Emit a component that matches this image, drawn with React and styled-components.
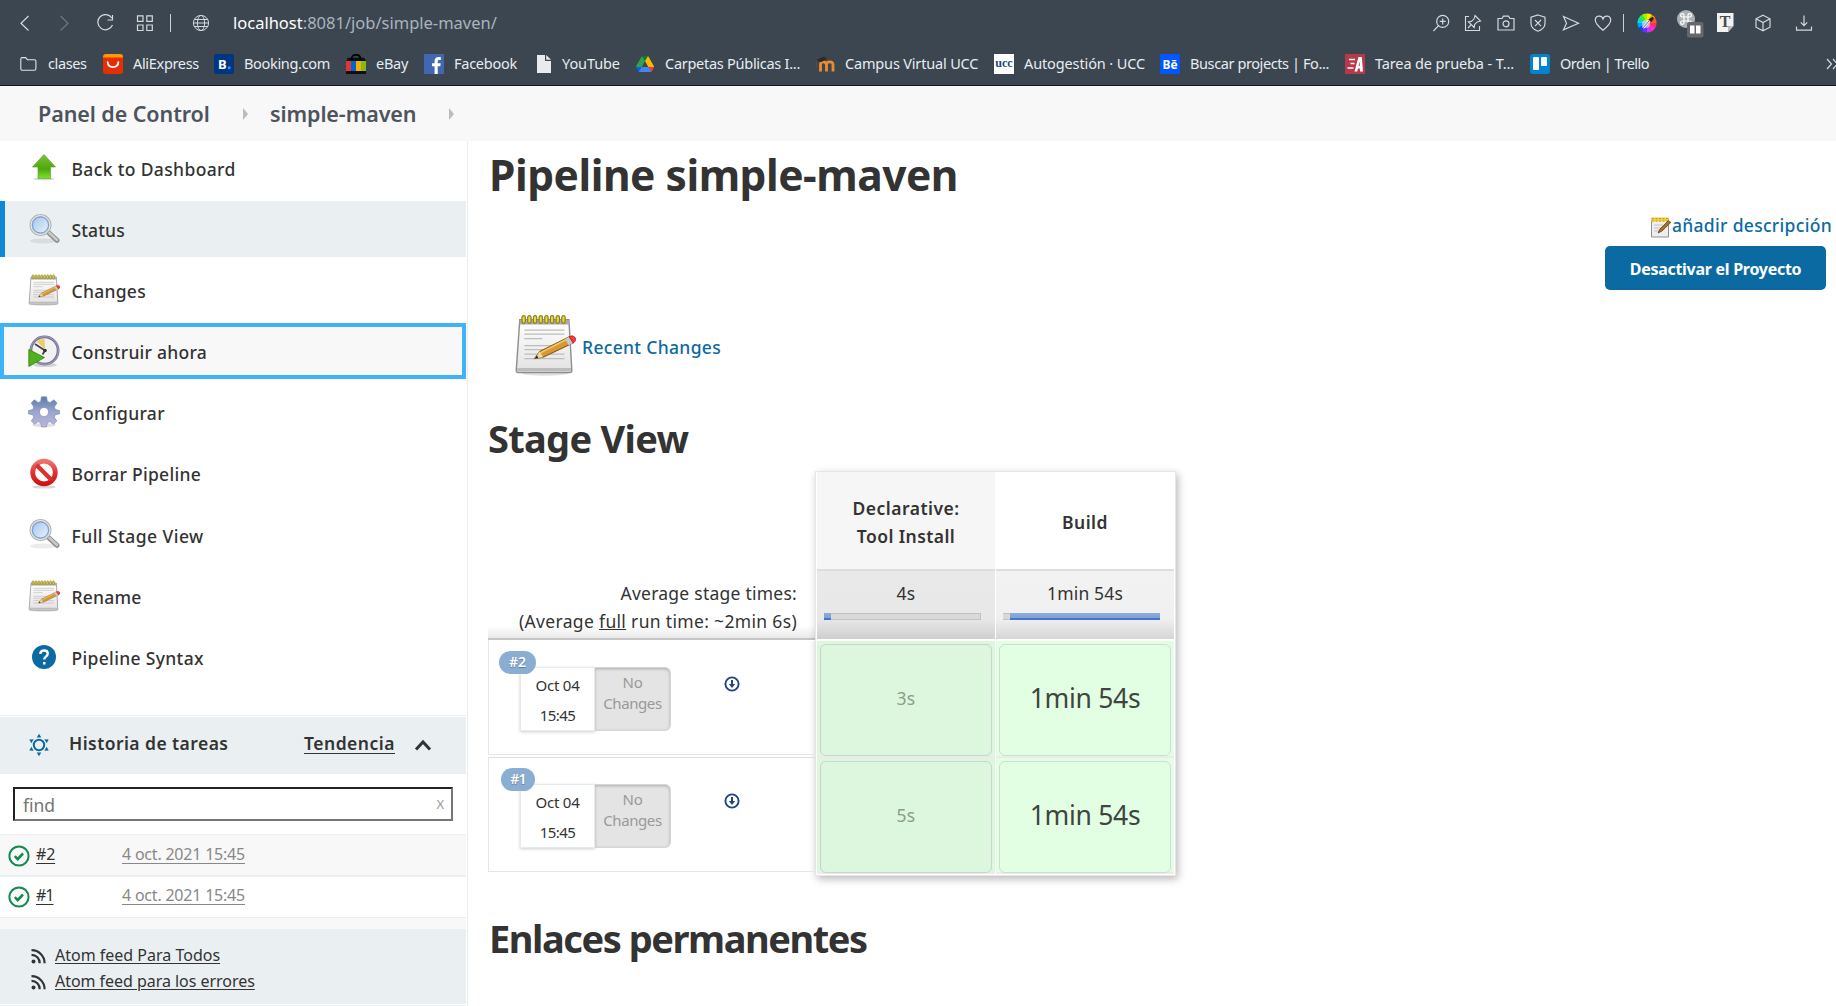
import React from "react";
import styled, { createGlobalStyle } from "styled-components";

const Global = createGlobalStyle`
  * { box-sizing: border-box; }
  body { margin: 0; background: #fff; font-family: "Noto Sans", "Open Sans", sans-serif; color: #333; }
  h1, h2 { margin: 0; }
`;

const Page = styled.div`
  width: 1836px; height: 1006px; overflow: hidden;
  display: flex; flex-direction: column;
`;

const Label = styled.span`
  white-space: nowrap;
  letter-spacing: ${(p) => p.$ls || 0}px;
`;
const L = ({ ls, children }) => <Label $ls={ls}>{children}</Label>;

/* ---------- browser chrome ---------- */
const Chrome = styled.header`
  flex: none; height: 86px; background: #3b4651; border-bottom: 1px solid #14181c;
  display: flex; flex-direction: column; color: #e8ecef;
`;
const ToolRow = styled.div`
  height: 45px; display: flex; align-items: center; padding: 0 23px 0 15px;
`;
const Slot = styled.span`
  flex: none; display: flex; align-items: center; justify-content: center;
  width: ${(p) => p.$w || 18}px; margin-left: ${(p) => p.$ml || 0}px;
`;
const Bar = styled.span`
  flex: none; width: 1px; height: 18px; background: #c9d0d6; margin-left: ${(p) => p.$ml}px;
`;
const Url = styled.div`
  margin-left: 23px; flex: 1; font-size: 16.500px; line-height: 20px; color: #aab4bd;
  b { font-weight: 400; color: #fff; }
`;
const Bookmarks = styled.nav`
  height: 40px; display: flex; align-items: center; padding: 0 0 2px 20px;
`;
const Bookmark = styled.a`
  flex: none; display: flex; align-items: center; font-size: 14.500px; line-height: 20px; color: #e8ecef;
  width: ${(p) => p.$w}px; gap: ${(p) => p.$gap || 10}px;
  span { padding-bottom: 2px; }
`;
const More = styled.span`margin-left: auto; display: flex; width: 10px; overflow: hidden; svg { flex: none; }`;

const Line = ({ size = 18, children, sw = 1.2, color = "#d3d9de" }) => (
  <svg width={size} height={size} viewBox="0 0 18 18" fill="none" stroke={color} strokeWidth={sw}>{children}</svg>
);

const Wheel = () => (
  <svg width="20" height="20" viewBox="0 0 20 20">
    {["#ffe600", "#ff9a00", "#ff5a20", "#ff3060", "#ff30c0", "#d030ff", "#6a30ff", "#1540ff", "#00a0ff", "#00e0d0", "#30e850", "#a8f000"].map((c, i) => {
      const a = (i * 30 * Math.PI) / 180, b = ((i * 30 + 31) * Math.PI) / 180;
      return <path key={c} fill={c} d={`M10 10L${10 + 9.6 * Math.sin(a)} ${10 - 9.6 * Math.cos(a)}A9.6 9.6 0 0 1 ${10 + 9.6 * Math.sin(b)} ${10 - 9.6 * Math.cos(b)}Z`} />;
    })}
    <circle cx="9" cy="11" r="4" fill="#fff" opacity=".5" />
    <path d="M6 15l6-7" stroke="#e8f4ff" strokeWidth="2.600" /><path d="M6 15l6-7" stroke="#57a" strokeWidth="1" />
    <path d="M11.500 6.500l3 2.600L17 5.200l-1.500-1.500z" fill="#222" />
  </svg>
);

const favs = {
  folder: <svg width="17" height="16" viewBox="0 0 17 16" fill="none" stroke="#e0e5e8" strokeWidth="1.100"><path d="M.8 12.800V3Q.8 1.600 2.200 1.600H5.600L7.400 3.700H14.500Q15.900 3.700 15.900 5.100V12.800Q15.900 14.200 14.500 14.200H2.200Q.8 14.200.8 12.800z" /></svg>,
  ali: <svg width="20" height="20" viewBox="0 0 20 20"><rect width="20" height="19" rx="3" fill="#ff9a00" /><path d="M0 3.500H20V17a3 3 0 0 1-3 3H3a3 3 0 0 1-3-3z" fill="#e62e04" /><path d="M4.700 8.300c.5 6.400 10.100 6.400 10.600 0" fill="none" stroke="#fff" strokeWidth="1.900" strokeLinecap="round" /></svg>,
  booking: <svg width="20" height="20" viewBox="0 0 20 20"><rect width="20" height="20" rx="3" fill="#003580" /><text x="4" y="15" fontSize="13" fontWeight="700" fontFamily="Noto Sans, sans-serif" fill="#fff">B</text><circle cx="15.200" cy="13.800" r="1.500" fill="#00a5ff" /></svg>,
  ebay: <svg width="20" height="20" viewBox="0 0 20 20"><path d="M2 3.500h16l2 3.500v13H0V7z" fill="#0c0e10" /><path d="M0 0h20v3.500H0z" fill="#3b4651" /><path d="M5.800 6V4.500c0-5 8.400-5 8.400 0V6" fill="none" stroke="#000" strokeWidth="1.800" /><path d="M0 7h5v10H0z" fill="#e53238" /><path d="M5 7h5v10H5z" fill="#0064d2" /><path d="M10 7h5v10h-5z" fill="#f5af02" /><path d="M15 7h5v10h-5z" fill="#86b817" /></svg>,
  fb: <svg width="20" height="20" viewBox="0 0 20 20"><rect width="20" height="20" fill="#4267b2" /><path d="M13.700 20v-7.700h2.600l.4-3h-3V7.400c0-.9.3-1.500 1.500-1.500h1.600V3.200c-.3 0-1.200-.1-2.300-.1-2.300 0-3.900 1.400-3.900 4v2.200H8v3h2.600V20z" fill="#fff" /></svg>,
  doc: <svg width="16" height="20" viewBox="0 0 16 20"><path d="M1 1h8v6h6v12H1z" fill="#e9ecee" /><path d="M10.200 1L15 5.800h-4.800z" fill="#e9ecee" /></svg>,
  drive: <svg width="18" height="18" viewBox="0 0 87 78"><path d="M6.600 66.800l3.800 6.700c.8 1.400 2 2.500 3.300 3.300L27.500 53H0c0 1.500.4 3.100 1.200 4.500z" fill="#0066da" /><path d="M43.600 25L29.900 1.200c-1.300.8-2.500 1.900-3.300 3.300l-25.400 44C.4 49.900 0 51.500 0 53h27.500z" fill="#2ea44f" /><path d="M73.600 76.800c1.300-.8 2.500-1.900 3.300-3.300l9.200-16c.8-1.400 1.200-3 1.200-4.500H59.800L65.700 64.500z" fill="#ea4335" /><path d="M43.600 25L57.400 1.200C56 .4 54.500 0 52.900 0H34.400c-1.600 0-3.200.4-4.500 1.200z" fill="#00832d" /><path d="M59.800 53H27.500L13.700 76.800c1.300.8 2.900 1.200 4.500 1.200h50.900c1.600 0 3.200-.4 4.500-1.200z" fill="#4285f4" /><path d="M73.400 26.500l-12.700-22c-.8-1.400-2-2.500-3.300-3.300L43.600 25l16.200 28h27.500c0-1.500-.4-3.100-1.200-4.500z" fill="#ffba00" /></svg>,
  moodle: <svg width="20" height="18" viewBox="0 0 20 18"><path d="M5.500 16.500V9.500q0-2.700 2.700-2.700T11.500 9.500V16.500M11.500 16.500V9.500q0-2.700 3.200-2.700T18 9.500V16.500" fill="none" stroke="#f08a2c" strokeWidth="2.800" /><path d="M1 5l8-3.500 3 2.500-6 3.200z" fill="#2b2b2d" /><path d="M1.500 5v8" stroke="#604a40" strokeWidth=".8" /></svg>,
  ucc: <svg width="20" height="20" viewBox="0 0 20 20"><rect width="20" height="20" fill="#fff" /><text x="1.200" y="12.500" fontSize="11.500" fontWeight="700" fontFamily="Liberation Serif, serif" fill="#1a4a7a" textLength="17.500" lengthAdjust="spacingAndGlyphs">ucc</text></svg>,
  be: <svg width="20" height="20" viewBox="0 0 20 20"><rect width="20" height="20" fill="#0057ff" /><text x="2.500" y="15" fontSize="12.500" fontWeight="700" fontFamily="Noto Sans, sans-serif" fill="#fff" textLength="15" lengthAdjust="spacingAndGlyphs">Bē</text></svg>,
  tdp: <svg width="20" height="20" viewBox="0 0 20 20"><rect width="20" height="20" fill="#b8384a" /><path d="M4 5.500h6M5.500 9.500h4M2.500 14h6" stroke="#fff" strokeWidth="1.500" /><path d="M9.500 17.500l3.900-14.500h3.400L18 17.500h-3l-.2-3h-1.800l-.8 3zM13.500 12h1.200L14.700 7z" fill="#fff" fillRule="evenodd" /></svg>,
  trello: <svg width="20" height="20" viewBox="0 0 20 20"><rect width="20" height="20" rx="3" fill="#0284d0" /><rect x="3" y="3" width="6" height="13" rx="1" fill="#fff" /><rect x="11" y="3" width="6" height="9" rx="1" fill="#fff" /></svg>,
};

const bookmarks = [
  ["folder", "clases", 83, 11, -0.4],
  ["ali", "AliExpress", 111, 10, -0.32],
  ["booking", "Booking.com", 132, 10, -0.32],
  ["ebay", "eBay", 78, 10, -0.25],
  ["fb", "Facebook", 112, 10, -0.25],
  ["doc", "YouTube", 100, 10, -0.1],
  ["drive", "Carpetas Públicas I...", 179, 11, -0.27],
  ["moodle", "Campus Virtual UCC", 179, 10, -0.17],
  ["ucc", "Autogestión · UCC", 166, 10, -0.12],
  ["be", "Buscar projects | Fo...", 185, 10, -0.4],
  ["tdp", "Tarea de prueba - T...", 185, 10, -0.13],
  ["trello", "Orden | Trello", 130, 10, -0.5],
];

/* ---------- breadcrumbs ---------- */
const Crumbs = styled.div`
  flex: none; height: 55px; background: #f8f8f8; display: flex; align-items: center; padding-left: 38px;
  font-size: 21.500px; font-weight: 600; line-height: 30px; color: #4d545d;
`;
const Crumb = styled.a`width: ${(p) => p.$w}px; flex: none; padding-top: 1px;`;
const CrumbArrow = styled.span`
  width: 0; height: 0; margin: 0 22px 0 0; flex: none;
  border: 6px solid transparent; border-left: 5px solid #bbb; border-right: 0;
`;

/* ---------- sidebar ---------- */
const Body = styled.div`flex: 1; min-height: 0; display: flex; overflow: hidden;`;
const Side = styled.aside`width: 468px; flex: none; border-right: 1px solid #eceff1; padding-right: 1px;`;
const Tasks = styled.div`height: 574px; display: flex; flex-direction: column; gap: 5.100px;`;
const Task = styled.a`
  flex: none; height: ${(p) => (p.$first ? 55 : 56)}px; display: flex; align-items: center; gap: 12px;
  padding: ${(p) => (p.$first ? 0 : 2)}px 0 0 ${(p) => (p.$active ? 23 : p.$focus ? 24 : 28)}px;
  font-size: 17.500px; font-weight: 500; color: #333;
  background: ${(p) => (p.$active ? "#eaeff2" : p.$focus ? "#f8f8f8" : "transparent")};
  ${(p) => p.$active && "border-left: 5px solid #0b88d6;"}
  ${(p) => p.$focus && "border: 4px solid #3fb3f8;"}
  > span:last-child { margin-left: -0.500px; }
`;
const TaskIcon = styled.span`width: 32px; height: 32px; display: flex; align-items: center; justify-content: center; margin-top: ${(p) => p.$mt}px;`;

const History = styled.section`border-top: 1px solid #eaeff2; padding-top: 1px;`;
const HistoryHead = styled.div`
  height: 57px; background: #eaeff2; display: flex; align-items: center; padding: 0 34px 4px 27px;
  font-size: 17.500px; font-weight: 600; color: #333;
  svg { margin-top: 3px; }
`;
const HistoryTitle = styled.span`margin-left: 18px; width: 235px; flex: none; padding-bottom: 1px;`;
const Trend = styled.a`width: 91px; flex: none; text-decoration: underline; text-underline-offset: 3px; text-decoration-thickness: 1px; margin-right: 19px; padding-bottom: 1px;`;
const SearchWrap = styled.div`height: 61px; padding: 13px 13px 0; border-bottom: 1px solid #eaeff2;`;
const Search = styled.div`
  height: 34px; border: 2px solid #767676; border-top-color: #222; border-left-color: #222; padding: 2px 7px 0 8px;
  display: flex; align-items: center; justify-content: space-between; font-size: 17.500px; color: #757575;
  small { font-size: 13px; color: #999; margin-bottom: 3px; }
`;
const BuildRow = styled.div`
  height: ${(p) => p.$h}px; background: ${(p) => p.$bg}; display: flex; align-items: center; padding: 0 0 ${(p) => (p.$b === 1 ? 4 : 2)}px 8px;
  border-bottom: ${(p) => p.$b}px solid #eaeff2; font-size: 16px; color: #333;
  svg { margin-top: 4px; }
`;
const BuildNo = styled.a`width: 86px; margin-left: 6px; text-decoration: underline; text-underline-offset: 3px;`;
const BuildDate = styled.a`color: #888; text-decoration: underline; text-underline-offset: 3px;`;
const Spacer = styled.div`height: 11px; background: #f8f8f8;`;
const Feeds = styled.div`
  height: 75px; background: #eaeff2; padding: 13px 0 0 30px; font-size: 16px; color: #333;
`;
const FeedEnd = styled.div`height: 2px; border-bottom: 1px solid #eaeff2;`;
const Feed = styled.a`height: 26px; display: flex; align-items: center; gap: 8px; text-decoration: underline; text-underline-offset: 2px; svg { margin-top: 2px; }`;

const Magnifier = () => (
  <svg width="32" height="32" viewBox="0 0 32 32">
    <ellipse cx="15" cy="28" rx="13" ry="2.500" fill="#000" opacity=".08" />
    <path d="M20.500 19.500l8.500 7.800" stroke="#8c8c8c" strokeWidth="5" strokeLinecap="round" />
    <path d="M21.500 20l7.500 7" stroke="#c9c9c9" strokeWidth="2.600" strokeLinecap="round" />
    <circle cx="12.500" cy="12" r="9.800" fill="#a9c9ee" stroke="#b5b5b5" strokeWidth="2.400" />
    <circle cx="12.500" cy="12" r="9.500" fill="none" stroke="#eee" strokeWidth="1" />
    <circle cx="12.500" cy="12" r="8" fill="url(#lens)" stroke="#6f9bd3" strokeWidth="1" />
    <defs><linearGradient id="lens" x1="0" y1="0" x2="1" y2="1"><stop offset="0" stopColor="#a5c6ec" /><stop offset="1" stopColor="#e8f2fc" /></linearGradient></defs>
  </svg>
);
const Notepad = ({ size = 32 }) => (
  <svg width={size} height={size} viewBox="0 0 48 48">
    <defs><linearGradient id="paper" x1="0" y1="0" x2="0" y2="1"><stop offset="0" stopColor="#fff" /><stop offset="1" stopColor="#e2e2e2" /></linearGradient></defs>
    <ellipse cx="24" cy="46" rx="18" ry="1.800" fill="#000" opacity=".12" />
    <path d="M4.500 4.500h38l2.300 39.500q0 1.300-1.300 1.300H3Q1.700 45.300 1.700 44z" fill="url(#paper)" stroke="#8e8e8e" strokeWidth="1.100" />
    <path d="M4.600 4.800h37.800l.3 3.400H4.300z" fill="#aaa" />
    <path d="M2.600 41.800h41.500v2.400H2.300z" fill="#bcbcbc" />
    <path d="M8 12.500h31M8 15.500h31M8 19h14M8 24.500h24M8 27.500h20M8 31h31M8 34.500h31" stroke="#bdbdbd" strokeWidth="1" />
    {[7.5, 11.9, 16.3, 20.7, 25.1, 29.5, 33.9, 38.3].map((x) => <rect key={x} x={x - 1.3} y="1.200" width="2.600" height="6" rx="1.300" fill="#e5d54a" stroke="#8d8015" strokeWidth=".9" />)}
    <path d="M16 34.500l4-5.500L43 17.500l3 4.800L22.500 33.500z" fill="#d59a35" stroke="#8a5a14" strokeWidth=".8" />
    <path d="M20.500 30L42 19" stroke="#f0c36c" strokeWidth="1.200" />
    <path d="M16 34.500l4-5.500 2.500 4.500z" fill="#efd9a5" /><path d="M16 34.500l1.800-2.500 1 2z" fill="#222" />
    <path d="M39.500 19.300l3.300-1.700 2.900 4.800-3.300 1.700z" fill="#c9c9c9" />
    <path d="M42.600 17.600q3-1.800 4.700.6t-1.600 4.200z" fill="#ef3b3b" stroke="#b52020" strokeWidth=".6" />
  </svg>
);
const NotepadSmall = () => (
  <svg width="22" height="22" viewBox="0 0 22 22">
    <path d="M1.500 4.500h17v16.500h-17z" fill="#eee" stroke="#8f8f8f" /><path d="M1 1.500h18v3.800H1z" fill="#f2cf3a" /><path d="M2 2.500h17M2 5h17" stroke="#c79d12" strokeWidth="1" strokeDasharray="2 1.500" />
    <path d="M4 9h9M4 12h7M4 15h5" stroke="#c4c4c4" /><path d="M8 17l2-4L18.500 4.500l2.300 2L12 15z" fill="#a4732b" stroke="#5f4218" strokeWidth=".8" />
  </svg>
);
const UpArrow = () => (
  <svg width="32" height="32" viewBox="0 0 32 32"><defs><linearGradient id="up" x1="0" y1="0" x2="0" y2="1"><stop offset="0" stopColor="#7ac53a" /><stop offset=".6" stopColor="#4ea60c" /><stop offset="1" stopColor="#7be32c" /></linearGradient></defs>
    <ellipse cx="16" cy="28" rx="11" ry="1.500" fill="#000" opacity=".15" />
    <path d="M16 3.500L27.500 16H22.500V27.500H10V16H4.500z" fill="url(#up)" stroke="#5fa82c" strokeWidth=".7" /></svg>
);
const ClockGo = () => (
  <svg width="32" height="32" viewBox="0 0 32 32">
    <ellipse cx="17" cy="30" rx="12" ry="2" fill="#000" opacity=".15" />
    <circle cx="16.500" cy="15.500" r="13.600" fill="#f1f1ef" stroke="#77739a" strokeWidth="2.800" /><circle cx="16.500" cy="15.500" r="14" fill="none" stroke="#aaa7c8" strokeWidth=".8" />
    <path d="M8 6l8.500-2.500L17 14z" fill="#e8cf6a" /><path d="M7 9l10 6.500-2.500 4" fill="none" stroke="#444" strokeWidth="1.800" /><circle cx="17" cy="15.500" r="1.800" fill="#333" />
    <path d="M.8 14.500L16.500 22.500.8 31.500z" fill="#51b01c" stroke="#2f8508" strokeWidth=".8" />
  </svg>
);
const Gear = () => (
  <svg width="32" height="32" viewBox="0 0 32 32"><defs><linearGradient id="gear" x1="0" y1="0" x2="0" y2="1"><stop offset="0" stopColor="#5b7bad" /><stop offset=".5" stopColor="#9aa6cf" /><stop offset="1" stopColor="#bcb5dc" /></linearGradient></defs>
    <ellipse cx="16" cy="29" rx="12" ry="2" fill="#000" opacity=".12" />
    <g fill="url(#gear)" stroke="#7886ae" strokeWidth=".6">
      <path fillRule="evenodd" d="M13.400.8h5.200l.8 4.600 2.600 1.100L26 3.800l3 3.200-2.600 4 1 2.600 4.200.9v3.400l-4.300.8-1 2.600 2.500 3.700-3.200 3.200-3.700-2.600-2.600 1.100-.9 4.300h-4.800l-.9-4.300-2.600-1.100-3.600 2.600L3.300 25l2.500-3.700-1-2.600-4.300-.8v-3.400l4.300-.9 1-2.600L3.200 7l3.100-3.200 4 2.700 2.400-1.100zM16 11.500a4.500 4.500 0 1 0 .01 0z" />
    </g></svg>
);
const Prohibited = () => (
  <svg width="32" height="32" viewBox="0 0 32 32"><defs><linearGradient id="no" x1="0" y1="0" x2="0" y2="1"><stop offset="0" stopColor="#ee7272" /><stop offset=".5" stopColor="#dd3434" /><stop offset="1" stopColor="#d01515" /></linearGradient></defs>
    <ellipse cx="16" cy="30" rx="12" ry="1.600" fill="#000" opacity=".15" />
    <circle cx="16" cy="15.500" r="11.300" fill="#fff" stroke="url(#no)" strokeWidth="4.800" /><path d="M8.500 8l15 15" stroke="#d83232" strokeWidth="4.400" /></svg>
);
const Help = () => (
  <svg width="24" height="24" viewBox="0 0 24 24"><circle cx="12" cy="12" r="12" fill="#0b6aa2" /><path d="M8.300 9q.1-3.500 3.800-3.500t3.700 3.100q0 1.700-1.900 3-1.700 1.200-1.700 2.900" fill="none" stroke="#fff" strokeWidth="2.300" /><path d="M11 17h2.500v2.500H11z" fill="#fff" /></svg>
);
const Sun = () => (
  <svg width="24" height="24" viewBox="0 0 24 24"><circle cx="12" cy="12" r="5.200" fill="none" stroke="#0b6aa2" strokeWidth="2" />
    <g fill="#0b6aa2">{[0, 60, 120, 180, 240, 300].map((r) => <path key={r} transform={`rotate(${r} 12 12)`} d="M12 .8l2.300 3.700H9.700z" />)}</g></svg>
);
const Check = () => (
  <svg width="22" height="22" viewBox="0 0 22 22" fill="none" stroke="#138a4e"><circle cx="11" cy="11" r="9.600" strokeWidth="2" /><path d="M6.800 11.200l2.900 2.900 5.300-5.600" strokeWidth="2.600" /></svg>
);
const Rss = () => (
  <svg width="17" height="17" viewBox="0 0 17 17" fill="none" stroke="#333" strokeWidth="2.200"><circle cx="3.500" cy="13.600" r="2" fill="#333" stroke="none" /><path d="M1.500 6.800a8.200 8.200 0 0 1 8.200 8.400M1.500 2.200A13 13 0 0 1 14.600 15.200" /></svg>
);

const tasks = [
  [UpArrow, "Back to Dashboard", 0.36, -4], [Magnifier, "Status", 0.14, -3], [Notepad, "Changes", 0.28, -3], [ClockGo, "Construir ahora", 0.25, -3],
  [Gear, "Configurar", 0.34, -2], [Prohibited, "Borrar Pipeline", 0.28, -2], [Magnifier, "Full Stage View", 0.46, -3], [Notepad, "Rename", 0.24, -2], [Help, "Pipeline Syntax", 0.33, -1],
];

/* ---------- main panel ---------- */
const Main = styled.main`flex: 1; min-width: 0; padding-left: 20px; display: flex; flex-direction: column;`;
const Title = styled.h1`height: 66px; flex: none; line-height: 68px; padding-left: 1px; font-size: 42.500px; font-weight: 700; color: #333;`;
const Actions = styled.div`height: 83px; flex: none; display: flex; flex-direction: column; align-items: flex-end; padding-right: 4px;`;
const DescLink = styled.a`height: 36px; display: flex; align-items: center; color: #0b6aa2; font-size: 17.500px; font-weight: 500; svg { margin-top: 4px; }`;
const Disable = styled.button`
  margin: 3px 6px 0 0; width: 221px; height: 44px; border: 0; border-radius: 5px; background: #0b6aa2; color: #fff;
  font: 700 16px "Noto Sans", sans-serif; padding: 1px 0 0; display: flex; align-items: center; justify-content: center;
`;
const Recent = styled.a`
  margin-top: 24px; height: 62px; flex: none; padding-left: 26px; display: flex; align-items: center; gap: 6px; color: #0b6aa2; font-size: 17.500px; font-weight: 500;
  span { padding-top: 3px; } svg { margin-top: -1px; }
`;
const Heading = styled.h2`margin-top: 32px; flex: none; height: 60px; line-height: 60px; padding-left: ${(p) => p.$pl || 0}px; font-size: 38px; font-weight: 700; color: #333;`;
const StageView = styled.div`margin-top: 3px; height: 405px; flex: none; display: flex; font-size: 17.500px; color: #333;`;
const Runs = styled.div`width: 327px; padding-top: 99px;`;
const Averages = styled.div`
  height: 70px; border-bottom: 2px solid #c6c6c6; padding: 9px 18px 0 0; text-align: right; line-height: 28px;
  background: linear-gradient(#fff 82%, #e9e9e9);
`;
const Run = styled.div`
  position: relative; height: 115px; margin-bottom: 2px; border: 1px solid #e6e6e6; border-top-color: ${(p) => (p.$first ? "#fff" : "#ddd")}; padding: 26px 0 0 31px; display: flex;
`;
const Badge = styled.span`
  position: absolute; left: ${(p) => p.$x}px; top: 10px; width: ${(p) => p.$w}px; height: 23px; border-radius: 12px; background: #8aaed2; color: #fff;
  font-size: 14px; font-weight: 600; line-height: 22px; text-align: center; text-shadow: 0 1px 1px rgba(0,0,0,.3);
`;
const When = styled.div`
  width: 75px; height: 64px; background: #fff; border: 1px solid #e4ecef; box-shadow: 0 1px 3px rgba(0,0,0,.2); font-size: 15px; line-height: 30px; text-align: center; padding-top: 2px;
`;
const NoChanges = styled.div`
  width: 76px; height: 64px; border-radius: 0 6px 6px 0; background: #e4e4e4; box-shadow: inset 0 1px 3px rgba(0,0,0,.25); border: 1px solid #d6d6d6; border-left: 0;
  color: #999; font-size: 15px; line-height: 21px; text-align: center; padding-top: 4px;
`;
const Download = styled.span`margin: 9px 0 0 53px; height: 17px; line-height: 0;`;
const Stages = styled.div`
  width: 361px; height: 405px; border: 1px solid #e6e6e6; padding: 0 1px; background: #fff; box-shadow: 2px 3px 8px rgba(0,0,0,.28);
  display: grid; grid-template-columns: 178px 178px; column-gap: 1px; grid-template-rows: 99px 70px 117px 116px;
`;
const StageHead = styled.div`
  background: ${(p) => (p.$dim ? "#f6f6f6" : "#fff")}; border-bottom: 2px solid #ddd; display: flex; align-items: center; justify-content: center; text-align: center;
  font-weight: 600; line-height: 28px; flex-direction: column; padding-top: 2px;
`;
const StageAvg = styled.div`
  background: linear-gradient(${(p) => (p.$dim ? "#e9e9e9, #e8e8e8 70%, #cfcfcf" : "#f2f2f2, #f0f0f0 70%, #d6d6d6")}); border-bottom: 1px solid #fff;
  padding: 8px 7px 0; line-height: 28px; text-align: center; margin-bottom: 1px;
`;
const Track = styled.div`
  width: 157px; height: 7px; margin: 6px 0 0 ${(p) => p.$ml}px; background: #d9d9d9; border: 1px solid #c2c2c2; border-width: 1px 1px 1px 0; display: flex;
  justify-content: ${(p) => (p.$end ? "flex-end" : "flex-start")};
`;
const Fill = styled.div`margin: -1px ${(p) => (p.$end ? -1 : 0)}px -1px 0; background: linear-gradient(#8aaedb, #7fa3d2 65%, #4673d0 75%);`;
const Cell = styled.div`padding: 3px 3px 0; background: ${(p) => (p.$dim ? "#ddf7de" : "#e3ffe3")}; border-bottom: 2px solid #e9ece9;`;
const Card = styled.div`
  height: 112px; border: 1px solid ${(p) => (p.$dim ? "#c8d6cc" : "#cddfd1")}; border-radius: 6px; display: flex; align-items: center; justify-content: center;
  font-size: ${(p) => (p.$dim ? 17.5 : 26.5)}px; color: ${(p) => (p.$dim ? "#8b9c8b" : "#3f453f")}; padding-bottom: 5px;
`;

const DownCircle = () => (
  <svg width="16" height="16" viewBox="0 0 16 16"><circle cx="8" cy="8" r="6.600" fill="none" stroke="#1f4788" strokeWidth="1.900" /><path d="M7 4h2v4h2.200L8 12 4.800 8H7z" fill="#1f4788" /></svg>
);

const runs = [
  { no: "#2", x: 10, w: 37, ls: 0 },
  { no: "#1", x: 12, w: 34, ls: -0.8 },
];

export default function App() {
  return (
    <Page>
      <Global />
      <Chrome>
        <ToolRow>
          <Slot><Line><path d="M13.500 2L6 9.200l7.500 7.300" /></Line></Slot>
          <Slot $ml={22}><Line color="#6d7781"><path d="M5.500 2L13 9.200 5.500 16.500" /></Line></Slot>
          <Slot $ml={23}><Line><path d="M15.800 4A7.600 7.600 0 1 0 16.500 11M16.500 1v5h-5" /></Line></Slot>
          <Slot $ml={22}><Line><path d="M1.500 1.800h5.500v5.500H1.500zM10.800 1.800h5.500v5.500h-5.500zM1.500 11h5.500v5.500H1.500zM10.800 11h5.500v5.500h-5.500z" /></Line></Slot>
          <Bar $ml={16} />
          <Slot $ml={21}><Line sw={1}><circle cx="9" cy="9" r="7.600" /><ellipse cx="9" cy="9" rx="3.600" ry="7.600" /><path d="M2.300 5.500h13.400M1.400 9h15.200M2.300 12.500h13.400" /></Line></Slot>
          <Url><L><b>localhost</b>:8081/job/simple-maven/</L></Url>
          <Slot><Line><circle cx="10.700" cy="7.400" r="6" /><path d="M6.500 11.700L1.500 17M7.700 7.400h6M10.700 4.400v6" /></Line></Slot>
          <Slot $ml={14}><Line sw={1.1}><path d="M5 2.500H1.500v14h14V12M11 1.500l5.500 5.500-3.300.9-2.600 2.700-.4 2.900-5.700-5.700 2.900-.4 2.700-2.600zM7.300 10.500L4 14" /></Line></Slot>
          <Slot $ml={15}><Line><path d="M1 4.500h4l1.500-2.300h5l1.500 2.300h4v11.500H1z" /><circle cx="9" cy="9.800" r="3" /></Line></Slot>
          <Slot $ml={14}><Line><path d="M9 1l7 2.200v6c0 4-3 6.500-7 8-4-1.500-7-4-7-8v-6zM6 6l6 6.200M12 6l-6 6.200" /></Line></Slot>
          <Slot $ml={15}><Line><path d="M1.500 2.500L16.500 9.200 1.500 15.800 4.500 9.200z" /></Line></Slot>
          <Slot $ml={14}><Line><path d="M9 16.200C3.500 11.800 1.300 9.500 1.300 6.300c0-5 6.200-5.600 7.700-1.300 1.500-4.300 7.700-3.700 7.700 1.300 0 3.200-2.200 5.500-7.700 9.900z" /></Line></Slot>
          <Bar $ml={11} />
          <Slot $ml={13} $w={20}><Wheel /></Slot>
          <Slot $ml={20} $w={28}>
            <svg width="28" height="36" viewBox="0 -5 28 36"><circle cx="9" cy="9" r="9" fill="#aeb1b3" /><path d="M7 7h4v4H7zM7 7H5.200A1.700 1.700 0 1 1 7 5.300zM11 7V5.200A1.700 1.700 0 1 1 12.800 7zM7 11v1.800A1.700 1.700 0 1 1 5.200 11zM11 11h1.800A1.700 1.700 0 1 1 11 12.800z" fill="none" stroke="#fff" strokeWidth="1.200" /><rect x="10" y="12" width="16.500" height="15.500" rx="2" fill="#66676a" /><path d="M13 15.500h4.500v8h-4.500zM19 15.500h4.500v8h-4.500z" fill="#fff" /></svg>
          </Slot>
          <Slot $ml={11}>
            <svg width="17" height="19" viewBox="0 0 17 19"><path d="M0 0h16.500v13L11 19H0z" fill="#f2f2f2" /><path d="M16.500 13h-5.500v6z" fill="#bbb" /><text x="8" y="14" textAnchor="middle" fontSize="16" fontWeight="700" fontFamily="Liberation Serif, serif" fill="#4a4a4a">T</text></svg>
          </Slot>
          <Slot $ml={20}><Line><path d="M9 1.200l7 3.600v8.400l-7 3.700-7-3.700V4.800zM2 4.800l7 3.700 7-3.700M9 8.500v8.400" /></Line></Slot>
          <Slot $ml={23}><Line><path d="M9 1.500v10M5.800 8.400L9 11.600l3.200-3.200M1.500 12.500v3.700h15v-3.700" /></Line></Slot>
        </ToolRow>
        <Bookmarks>
          {bookmarks.map(([icon, text, w, gap, ls]) => (
            <Bookmark key={text} $w={w} $gap={gap}>{favs[icon]}<L ls={ls}>{text}</L></Bookmark>
          ))}
          <More><svg width="14" height="12" viewBox="0 0 14 12" fill="none" stroke="#d3d9de" strokeWidth="1.200"><path d="M1 1l4.500 5L1 11M7 1l4.500 5L7 11" /></svg></More>
        </Bookmarks>
      </Chrome>
      <Crumbs>
        <Crumb $w={205}><L ls={-0.08}>Panel de Control</L></Crumb><CrumbArrow />
        <Crumb $w={179}><L ls={-0.1}>simple-maven</L></Crumb><CrumbArrow />
      </Crumbs>
      <Body>
        <Side>
          <Tasks>
            {tasks.map(([Icon, text, ls, mt], i) => (
              <Task key={text} $first={i === 0} $active={text === "Status"} $focus={text === "Construir ahora"}>
                <TaskIcon $mt={mt}><Icon /></TaskIcon><L ls={ls}>{text}</L>
              </Task>
            ))}
          </Tasks>
          <History>
            <HistoryHead>
              <Sun /><HistoryTitle><L ls={0.44}>Historia de tareas</L></HistoryTitle>
              <Trend><L ls={0.5}>Tendencia</L></Trend>
              <svg width="18" height="12" viewBox="0 0 18 12" fill="none" stroke="#333" strokeWidth="3"><path d="M2 10.500l7-7.500 7 7.500" /></svg>
            </HistoryHead>
            <SearchWrap><Search><L>find</L><small>X</small></Search></SearchWrap>
            <BuildRow $h={42} $b={2} $bg="#f8f8f8"><Check /><BuildNo><L ls={-0.2}>#2</L></BuildNo><BuildDate><L ls={-0.21}>4 oct. 2021 15:45</L></BuildDate></BuildRow>
            <BuildRow $h={41} $b={1} $bg="#fff"><Check /><BuildNo><L ls={-1}>#1</L></BuildNo><BuildDate><L ls={-0.21}>4 oct. 2021 15:45</L></BuildDate></BuildRow>
            <Spacer />
            <Feeds>
              <Feed><Rss /><L>Atom feed Para Todos</L></Feed>
              <Feed><Rss /><L ls={-0.04}>Atom feed para los errores</L></Feed>
            </Feeds>
            <FeedEnd />
          </History>
        </Side>
        <Main>
          <Title><L ls={-0.47}>Pipeline simple-maven</L></Title>
          <Actions>
            <DescLink><NotepadSmall /><L ls={0.31}>añadir descripción</L></DescLink>
            <Disable><L ls={-0.28}>Desactivar el Proyecto</L></Disable>
          </Actions>
          <Recent><Notepad size={62} /><L ls={0.33}>Recent Changes</L></Recent>
          <Heading><L ls={-0.7}>Stage View</L></Heading>
          <StageView>
            <Runs>
              <Averages><L ls={0.24}>Average stage times:</L><br /><L ls={0.33}>(Average <u>full</u> run time: ~2min 6s)</L></Averages>
              {runs.map((r, i) => (
                <Run key={r.no} $first={i === 0}>
                  <Badge $x={r.x} $w={r.w}><L ls={r.ls}>{r.no}</L></Badge>
                  <When><L ls={-0.23}>Oct 04</L><br /><L ls={-0.6}>15:45</L></When>
                  <NoChanges><L ls={-0.2}>No</L><br /><L ls={-0.42}>Changes</L></NoChanges>
                  <Download><DownCircle /></Download>
                </Run>
              ))}
            </Runs>
            <Stages>
              <StageHead $dim><L ls={0.48}>Declarative:</L><L ls={0.42}>Tool Install</L></StageHead>
              <StageHead><L ls={0.45}>Build</L></StageHead>
              <StageAvg $dim><L ls={0.2}>4s</L><Track $ml={0}><Fill style={{ width: "4.5%" }} /></Track></StageAvg>
              <StageAvg><L ls={0.17}>1min 54s</L><Track $ml={0} $end><Fill $end style={{ width: "96%" }} /></Track></StageAvg>
              {["3s", "5s"].map((t) => (
                <React.Fragment key={t}>
                  <Cell $dim><Card $dim><L ls={0.2}>{t}</L></Card></Cell>
                  <Cell><Card><L ls={-0.3}>1min 54s</L></Card></Cell>
                </React.Fragment>
              ))}
            </Stages>
          </StageView>
          <Heading $pl={1}><L ls={-1.45}>Enlaces permanentes</L></Heading>
        </Main>
      </Body>
    </Page>
  );
}
